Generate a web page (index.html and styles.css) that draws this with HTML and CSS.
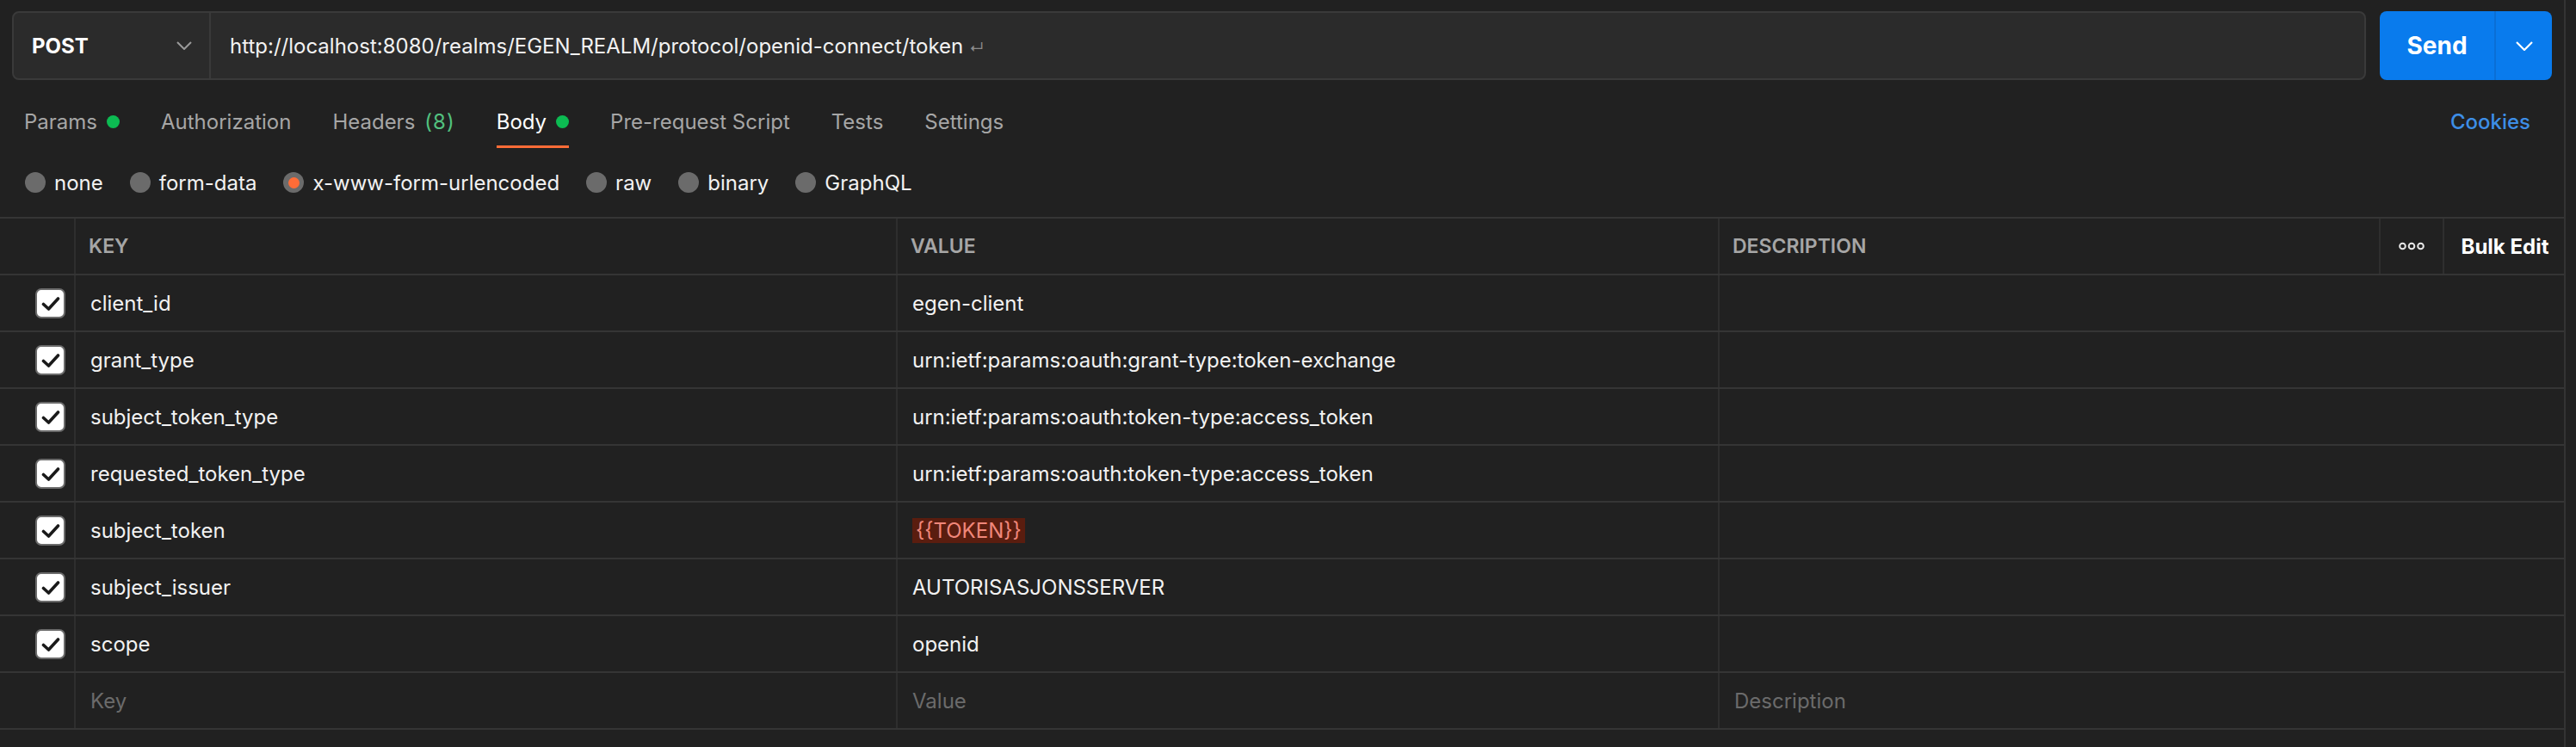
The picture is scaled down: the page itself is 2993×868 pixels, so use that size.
FILE: index.html
```html
<!DOCTYPE html>
<html lang="en">
<head>
<meta charset="utf-8">
<title>Postman request</title>
<link rel="stylesheet" href="styles.css">
</head>
<body>
<div class="app">
  <div class="request-bar">
    <div class="url-group">
      <div class="method">
        <span class="method-name">POST</span>
        <svg class="chev" width="18" height="10" viewBox="0 0 18 10"><path d="M1 1 L9 9 L17 1" fill="none" stroke="#9a9a9a" stroke-width="2"/></svg>
      </div>
      <div class="url">http://localhost:8080/realms/EGEN_REALM/protocol/openid-connect/token<span class="ret">↵</span></div>
    </div>
    <div class="send">
      <span class="send-label">Send</span>
      <span class="send-caret"><svg width="20" height="11" viewBox="0 0 20 11"><path d="M1 1 L10 10 L19 1" fill="none" stroke="#ffffff" stroke-width="2.2"/></svg></span>
    </div>
  </div>

  <div class="tabs">
    <div class="tab">Params<span class="dot"></span></div>
    <div class="tab">Authorization</div>
    <div class="tab">Headers<span class="count">(8)</span></div>
    <div class="tab active">Body<span class="dot"></span></div>
    <div class="tab">Pre-request Script</div>
    <div class="tab">Tests</div>
    <div class="tab">Settings</div>
    <div class="cookies">Cookies</div>
  </div>

  <div class="body-types">
    <label class="opt"><span class="radio"></span>none</label>
    <label class="opt"><span class="radio"></span>form-data</label>
    <label class="opt"><span class="radio selected"></span>x-www-form-urlencoded</label>
    <label class="opt"><span class="radio"></span>raw</label>
    <label class="opt"><span class="radio"></span>binary</label>
    <label class="opt"><span class="radio"></span>GraphQL</label>
  </div>

  <div class="kv">
    <div class="row head">
      <div class="cell chk"></div>
      <div class="cell">KEY</div>
      <div class="cell">VALUE</div>
      <div class="cell desc-head">
        <span class="desc-label">DESCRIPTION</span>
        <span class="more"><svg width="30" height="10" viewBox="0 0 30 10"><circle cx="4.5" cy="5" r="3.3" fill="none" stroke="#e8e8e8" stroke-width="2"/><circle cx="15" cy="5" r="3.3" fill="none" stroke="#e8e8e8" stroke-width="2"/><circle cx="25.5" cy="5" r="3.3" fill="none" stroke="#e8e8e8" stroke-width="2"/></svg></span>
        <span class="bulk">Bulk Edit</span>
      </div>
    </div>

    <div class="row">
      <div class="cell chk"><span class="box"><svg width="22" height="18" viewBox="0 0 22 18"><path d="M2.5 9.5 L8.5 15 L19.5 3" fill="none" stroke="#1a1a1a" stroke-width="3.6" stroke-linecap="round" stroke-linejoin="round"/></svg></span></div>
      <div class="cell">client_id</div>
      <div class="cell">egen-client</div>
      <div class="cell"></div>
    </div>
    <div class="row">
      <div class="cell chk"><span class="box"><svg width="22" height="18" viewBox="0 0 22 18"><path d="M2.5 9.5 L8.5 15 L19.5 3" fill="none" stroke="#1a1a1a" stroke-width="3.6" stroke-linecap="round" stroke-linejoin="round"/></svg></span></div>
      <div class="cell">grant_type</div>
      <div class="cell">urn:ietf:params:oauth:grant-type:token-exchange</div>
      <div class="cell"></div>
    </div>
    <div class="row">
      <div class="cell chk"><span class="box"><svg width="22" height="18" viewBox="0 0 22 18"><path d="M2.5 9.5 L8.5 15 L19.5 3" fill="none" stroke="#1a1a1a" stroke-width="3.6" stroke-linecap="round" stroke-linejoin="round"/></svg></span></div>
      <div class="cell">subject_token_type</div>
      <div class="cell">urn:ietf:params:oauth:token-type:access_token</div>
      <div class="cell"></div>
    </div>
    <div class="row">
      <div class="cell chk"><span class="box"><svg width="22" height="18" viewBox="0 0 22 18"><path d="M2.5 9.5 L8.5 15 L19.5 3" fill="none" stroke="#1a1a1a" stroke-width="3.6" stroke-linecap="round" stroke-linejoin="round"/></svg></span></div>
      <div class="cell">requested_token_type</div>
      <div class="cell">urn:ietf:params:oauth:token-type:access_token</div>
      <div class="cell"></div>
    </div>
    <div class="row">
      <div class="cell chk"><span class="box"><svg width="22" height="18" viewBox="0 0 22 18"><path d="M2.5 9.5 L8.5 15 L19.5 3" fill="none" stroke="#1a1a1a" stroke-width="3.6" stroke-linecap="round" stroke-linejoin="round"/></svg></span></div>
      <div class="cell">subject_token</div>
      <div class="cell"><span class="var">{{TOKEN}}</span></div>
      <div class="cell"></div>
    </div>
    <div class="row">
      <div class="cell chk"><span class="box"><svg width="22" height="18" viewBox="0 0 22 18"><path d="M2.5 9.5 L8.5 15 L19.5 3" fill="none" stroke="#1a1a1a" stroke-width="3.6" stroke-linecap="round" stroke-linejoin="round"/></svg></span></div>
      <div class="cell">subject_issuer</div>
      <div class="cell">AUTORISASJONSSERVER</div>
      <div class="cell"></div>
    </div>
    <div class="row">
      <div class="cell chk"><span class="box"><svg width="22" height="18" viewBox="0 0 22 18"><path d="M2.5 9.5 L8.5 15 L19.5 3" fill="none" stroke="#1a1a1a" stroke-width="3.6" stroke-linecap="round" stroke-linejoin="round"/></svg></span></div>
      <div class="cell">scope</div>
      <div class="cell">openid</div>
      <div class="cell"></div>
    </div>
    <div class="row placeholder">
      <div class="cell chk"></div>
      <div class="cell">Key</div>
      <div class="cell">Value</div>
      <div class="cell">Description</div>
    </div>
  </div>
</div>
</body>
</html>
```

FILE: styles.css
```css
* { box-sizing: border-box; }

html, body {
  margin: 0;
  padding: 0;
  background: #212121;
}

body {
  font-family: Inter, "Noto Sans", "Liberation Sans", sans-serif;
  color: #f2f2f2;
  width: 2993px;
  height: 868px;
  overflow: hidden;
}

.app {
  width: 2981px;
  height: 868px;
  border-right: 2px solid #333333;
}

/* request bar */
.request-bar {
  display: flex;
  gap: 16px;
  padding: 13px 14px 0 14px;
  height: 93px;
}

.url-group {
  flex: 1;
  display: flex;
  height: 80px;
  background: #2b2b2b;
  border: 2px solid #3a3a3a;
  border-radius: 8px;
}

.method {
  width: 229px;
  display: flex;
  align-items: center;
  justify-content: space-between;
  padding: 0 20px 0 21px;
  border-right: 2px solid #3a3a3a;
}

.method-name {
  font-weight: 700;
  font-size: 24px;
  color: #ffffff;
}

.url {
  display: flex;
  align-items: center;
  padding-left: 22px;
  font-size: 24px;
  color: #f2f2f2;
}

.ret {
  color: #8a8a8a;
  font-size: 17px;
  margin-left: 7px;
  margin-top: 6px;
}

.send {
  width: 200px;
  height: 80px;
  display: flex;
  background: #097bed;
  border-radius: 8px;
  color: #ffffff;
}

.send-label {
  width: 135px;
  display: flex;
  align-items: center;
  justify-content: center;
  font-weight: 700;
  font-size: 28px;
  border-right: 2px solid #0a6fd6;
}

.send-caret {
  flex: 1;
  display: flex;
  align-items: center;
  justify-content: center;
}

/* tabs */
.tabs {
  display: flex;
  align-items: stretch;
  gap: 48px;
  height: 79px;
  padding: 21px 39px 0 28px;
}

.tab {
  display: flex;
  align-items: center;
  font-size: 24px;
  color: #a6a6a6;
  border-bottom: 3px solid transparent;
  white-space: nowrap;
}

.tab.active {
  color: #ffffff;
  border-bottom-color: #ff6c37;
}

.tab .count {
  color: #52c17f;
  margin-left: 11px;
  letter-spacing: 1px;
}

.dot {
  width: 15px;
  height: 15px;
  border-radius: 50%;
  background: #0cbb52;
  margin-left: 11px;
}

.cookies {
  margin-left: auto;
  display: flex;
  align-items: center;
  font-size: 24px;
  font-weight: 500;
  color: #3d8ee6;
  border-bottom: 3px solid transparent;
}

/* body types */
.body-types {
  display: flex;
  align-items: center;
  gap: 31px;
  height: 80px;
  padding-left: 29px;
}

.opt {
  display: flex;
  align-items: center;
  gap: 10px;
  font-size: 24px;
  color: #f2f2f2;
}

.radio {
  width: 24px;
  height: 24px;
  border-radius: 50%;
  background: #6b6b6b;
  display: flex;
  align-items: center;
  justify-content: center;
}

.radio.selected::after {
  content: "";
  width: 13px;
  height: 13px;
  border-radius: 50%;
  background: #ff6c37;
}

/* key value table */
.kv {
  border-top: 2px solid #353535;
}

.row {
  display: grid;
  grid-template-columns: 88px 955px 955px 1fr;
  height: 66px;
  border-bottom: 2px solid #353535;
}

.cell {
  display: flex;
  align-items: center;
  padding-left: 17px;
  font-size: 24px;
  color: #f2f2f2;
  border-right: 2px solid #2e2e2e;
  white-space: nowrap;
}

.cell:last-child {
  border-right: none;
}

.cell.chk {
  padding: 0 10px 0 0;
  justify-content: flex-end;
}

.box {
  width: 35px;
  height: 35px;
  border-radius: 7px;
  background: #ffffff;
  border: 2px solid #6b6b6b;
  display: flex;
  align-items: center;
  justify-content: center;
  margin-top: 1px;
}

.head .cell {
  color: #a6a6a6;
  font-weight: 600;
  font-size: 23px;
  padding-left: 15px;
}

.head .cell.chk {
  padding: 0;
}

.desc-head {
  padding-left: 0 !important;
}

.desc-label {
  flex: 1;
  align-self: stretch;
  display: flex;
  align-items: center;
  padding-left: 15px;
  border-right: 2px solid #2e2e2e;
}

.more {
  width: 74px;
  align-self: stretch;
  display: flex;
  align-items: center;
  justify-content: center;
  border-right: 2px solid #2e2e2e;
}

.bulk {
  width: 139px;
  display: flex;
  align-items: center;
  justify-content: center;
  font-weight: 700;
  font-size: 24px;
  color: #ffffff;
  padding-left: 2px;
}

.var {
  background: #5a1d0f;
  color: #f0877a;
  padding: 2px 4px;
  line-height: 25px;
}

.placeholder .cell {
  color: #6b6b6b;
}
```
